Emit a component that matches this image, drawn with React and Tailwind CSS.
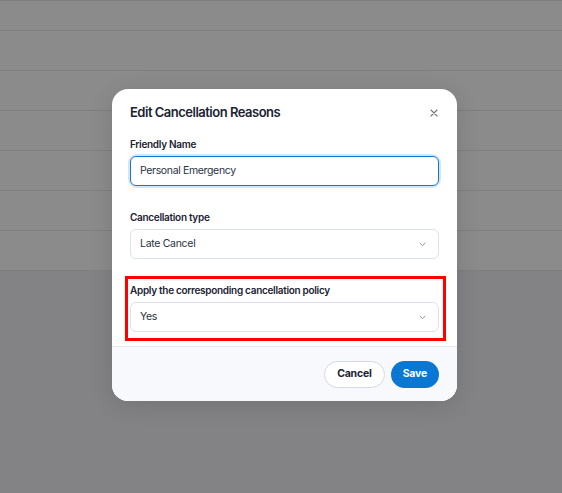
function Chevron() {
  return (
    <svg width="7" height="5" viewBox="0 0 7 5" fill="none" className="text-[#8a93a3]">
      <path d="M1 1.2 L3.5 3.6 L6 1.2" stroke="currentColor" strokeWidth="1" strokeLinecap="round" strokeLinejoin="round" />
    </svg>
  )
}

function Select({ value }) {
  return (
    <div className="h-[30px] rounded-[6px] border border-[#dde1e9] bg-white flex items-center justify-between pl-[9px] pr-[12px]">
      <span className="text-[10.5px] text-[#2a3142] tracking-[-0.3px]">{value}</span>
      <Chevron />
    </div>
  )
}

export default function App() {
  const rows = [0, 1, 2, 3, 4, 5]
  return (
    <div className="relative w-[562px] h-[493px] overflow-hidden bg-[#838386] font-['Inter',sans-serif]">
      {/* dimmed table behind the dialog */}
      <div className="flex flex-col bg-[#8b8b8c]">
        <div className="h-[31px] border-t border-b border-[#7e7e80]" />
        {rows.map(r => (
          <div key={r} className="h-[40px] border-b border-[#7e7e80]" />
        ))}
      </div>

      <div className="absolute left-[112px] top-[89px] w-[345px] rounded-[16px] bg-white shadow-[0_4px_24px_rgba(0,0,0,0.12)] overflow-hidden">
        <div className="px-[18px] pt-[15px] pb-[5px]">
          <div className="flex items-center justify-between h-[18px]">
            <h2 className="text-[13px] font-semibold text-[#1b2233] tracking-[-0.5px]">Edit Cancellation Reasons</h2>
            <svg width="8" height="8" viewBox="0 0 8 8" className="mr-[1px] text-[#6f7686]">
              <path d="M1 1 L7 7 M7 1 L1 7" stroke="currentColor" strokeWidth="1.1" strokeLinecap="round" />
            </svg>
          </div>

          <label className="block mt-[16px] text-[10px] font-semibold text-[#1b2233] tracking-[-0.3px] leading-[13px]">Friendly Name</label>
          <div className="mt-[5px] rounded-[7px] shadow-[0_0_0_2px_#d3e6f8]">
            <div className="h-[30px] rounded-[6px] border border-[#1677d2] bg-white flex items-center pl-[9px]">
              <span className="text-[10.5px] text-[#2a3142] tracking-[-0.35px]">Personal Emergency</span>
            </div>
          </div>

          <label className="block mt-[25px] text-[10px] font-semibold text-[#1b2233] tracking-[-0.3px] leading-[13px]">Cancellation type</label>
          <div className="mt-[5px]">
            <Select value="Late Cancel" />
          </div>

          <div className="mt-[17px] ml-[-5px] mr-[-7px] border-[3px] border-[#ff0000] pl-[2px] pr-[4px] pt-[5px] pb-[6px]">
            <label className="block text-[10px] font-semibold text-[#1b2233] tracking-[-0.3px] leading-[13px]">Apply the corresponding cancellation policy</label>
            <div className="mt-[5px]">
              <Select value="Yes" />
            </div>
          </div>
        </div>

        <div className="border-t border-[#e6e9ef] bg-[#f8f9fc] h-[55px] flex items-center justify-end gap-[6px] pr-[18px]">
          <button className="h-[27px] px-[12px] rounded-full border border-[#d3d8e0] bg-white text-[10.5px] font-bold text-[#1b2233] tracking-[-0.2px]">Cancel</button>
          <button className="h-[27px] px-[12px] rounded-full bg-[#0a78d2] text-[10.5px] font-bold text-white tracking-[-0.2px]">Save</button>
        </div>
      </div>
    </div>
  )
}
